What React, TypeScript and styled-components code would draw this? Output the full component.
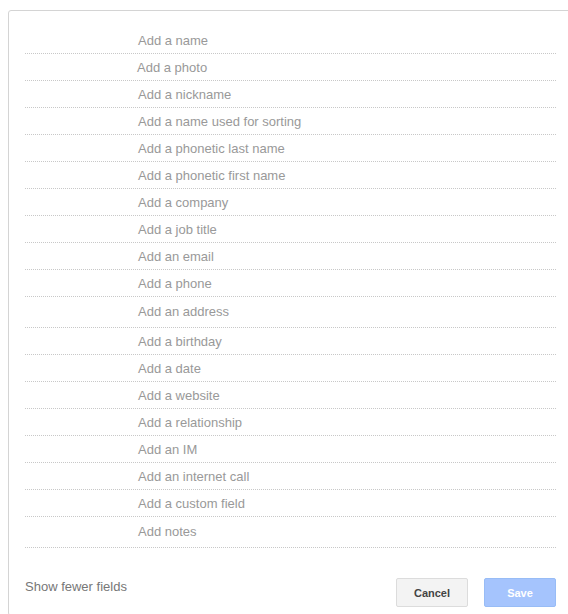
import React from "react";
import styled, { createGlobalStyle } from "styled-components";

const Global = createGlobalStyle`
  html, body { margin: 0; padding: 0; background: #fff; overflow: hidden; }
  body { font-family: Arial, "Liberation Sans", sans-serif; }
`;

const Card = styled.div`
  margin: 10px 0 0 8px;
  width: 531px;
  padding: 16px 16px 8px 16px;
  border: 1px solid #d4d4d4;
  border-radius: 3px;
  background: #fff;
`;

const FieldList = styled.div`
  display: flex;
  flex-direction: column;
`;

const Row = styled.div<{ $tall?: boolean; $shift?: number }>`
  height: ${(p) => (p.$tall ? 30 : 25)}px;
  padding-top: ${(p) => (p.$tall ? 0 : 1)}px;
  line-height: ${(p) => (p.$tall ? 30 : 26)}px;
  border-bottom: 1px dotted #c8c8c8;
  padding-left: ${(p) => 113 + (p.$shift ?? 0)}px;
  font-size: 13px;
  color: #999;
  white-space: nowrap;
  overflow: hidden;
  cursor: text;
`;

const Footer = styled.div`
  display: flex;
  align-items: flex-start;
  justify-content: space-between;
  padding-top: 30px;
`;

const ToggleLink = styled.span`
  font-size: 13px;
  line-height: 16px;
  padding-top: 1px;
  color: #777;
  cursor: pointer;
`;

const Actions = styled.div`
  display: flex;
  gap: 16px;
`;

const Button = styled.button<{ $primary?: boolean }>`
  box-sizing: border-box;
  width: 72px;
  height: 29px;
  border-radius: 2px;
  font-family: Arial, "Liberation Sans", sans-serif;
  font-size: 11px;
  font-weight: bold;
  padding: 0;
  border: 1px solid ${(p) => (p.$primary ? "#98bcf6" : "#dcdcdc")};
  background: ${(p) => (p.$primary ? "#a5c4fd" : "#f3f3f3")};
  color: ${(p) => (p.$primary ? "#fff" : "#444")};
  cursor: ${(p) => (p.$primary ? "default" : "pointer")};
`;

const fields: { label: string; tall?: boolean; shift?: number }[] = [
  { label: "Add a name" },
  { label: "Add a photo", shift: -1 },
  { label: "Add a nickname" },
  { label: "Add a name used for sorting" },
  { label: "Add a phonetic last name" },
  { label: "Add a phonetic first name" },
  { label: "Add a company" },
  { label: "Add a job title" },
  { label: "Add an email" },
  { label: "Add a phone" },
  { label: "Add an address", tall: true },
  { label: "Add a birthday" },
  { label: "Add a date" },
  { label: "Add a website" },
  { label: "Add a relationship" },
  { label: "Add an IM" },
  { label: "Add an internet call" },
  { label: "Add a custom field" },
  { label: "Add notes", tall: true },
];

export default function App() {
  return (
    <>
      <Global />
      <Card>
        <FieldList>
          {fields.map((f) => (
            <Row key={f.label} $tall={f.tall} $shift={f.shift}>
              {f.label}
            </Row>
          ))}
        </FieldList>
        <Footer>
          <ToggleLink>Show fewer fields</ToggleLink>
          <Actions>
            <Button>Cancel</Button>
            <Button $primary disabled>
              Save
            </Button>
          </Actions>
        </Footer>
      </Card>
    </>
  );
}
